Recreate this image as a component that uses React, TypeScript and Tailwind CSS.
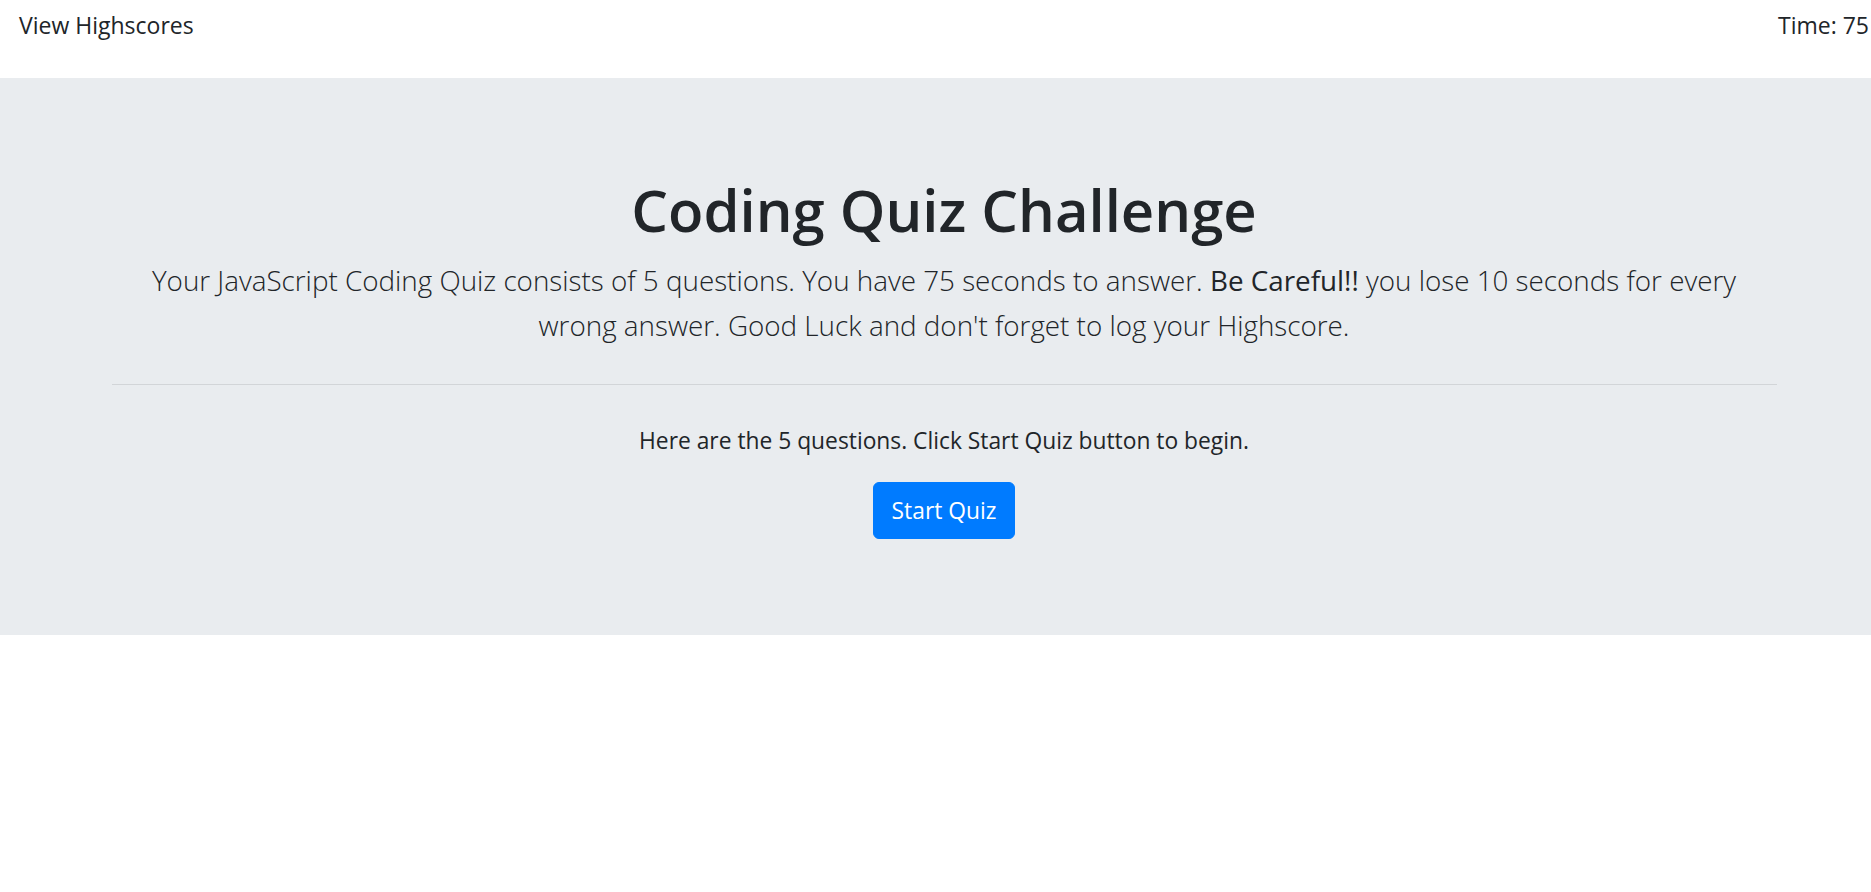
export default function App() {
  return (
    <div className="w-full overflow-hidden bg-white" style={{ fontFamily: "'Open Sans', 'Noto Sans', sans-serif" }}>
      <div className="w-[1888px] min-h-[892px] text-[#212529]">
        {/* Top bar */}
        <header className="flex h-[78px] items-start justify-between px-[19px] pt-[7px] text-[23px] leading-[36px]">
          <a className="cursor-pointer">View Highscores</a>
          <span>Time: 75</span>
        </header>

        {/* Jumbotron */}
        <section className="bg-[#e9ecef] py-[96px]">
          <div className="mx-auto w-[1665px] text-center">
            <h1 className="mb-[12px] text-[58px] font-semibold leading-[72px]">Coding Quiz Challenge</h1>
            <p className="text-[27.8px] font-light leading-[45px]">
              Your JavaScript Coding Quiz consists of 5 questions. You have 75 seconds to answer.{' '}
              <strong className="font-normal">Be Careful!!</strong> you lose 10 seconds for every
              <br />
              wrong answer. Good Luck and don't forget to log your Highscore.
            </p>
            <hr className="mt-[36px] mb-[38px] border-t border-[#d2d5d8]" />
            <p className="mb-[23px] text-[22.8px] leading-[36px]">
              Here are the 5 questions. Click Start Quiz button to begin.
            </p>
            <button className="rounded-[6px] border border-[#007bff] bg-[#007bff] px-[18px] py-[9.5px] text-[22.8px] leading-[36px] text-white">
              Start Quiz
            </button>
          </div>
        </section>
      </div>
    </div>
  );
}
